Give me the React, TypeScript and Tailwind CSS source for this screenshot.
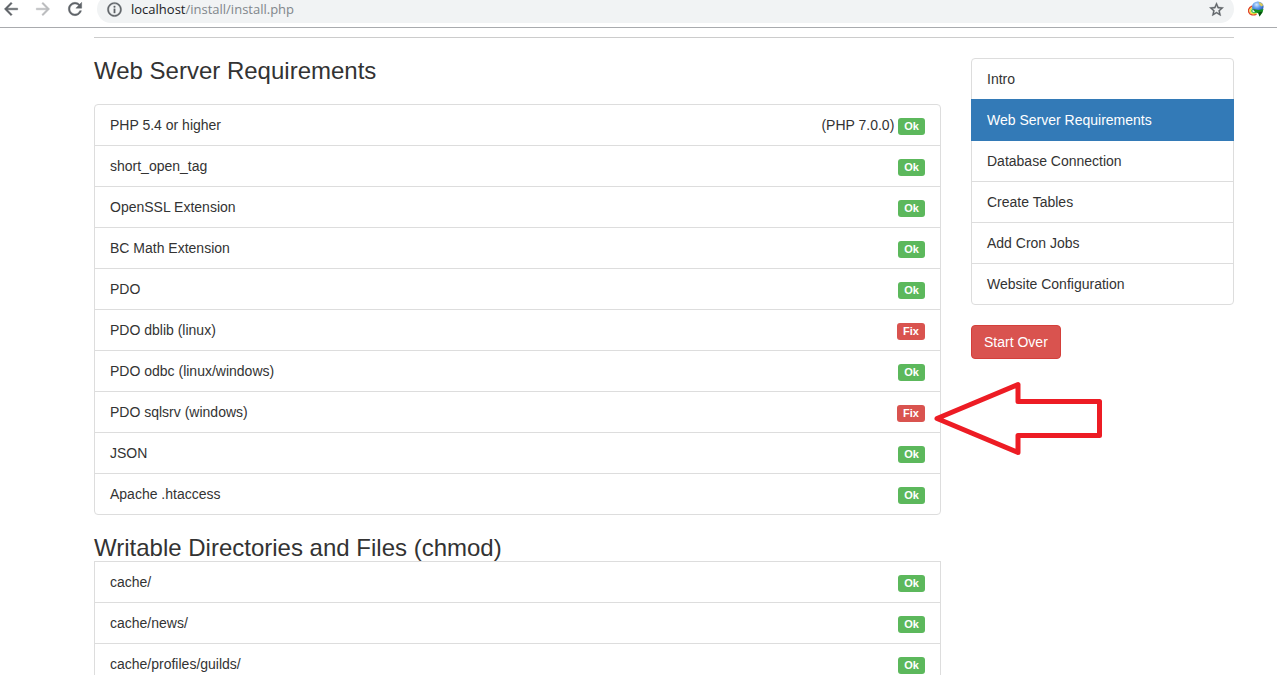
import React from 'react'
import clsx from 'clsx'

type Check = {
    name: string
    ok: boolean
    note?: string
}

const requirements: Check[] = [
    { name: 'PHP 5.4 or higher', ok: true, note: '(PHP 7.0.0)' },
    { name: 'short_open_tag', ok: true },
    { name: 'OpenSSL Extension', ok: true },
    { name: 'BC Math Extension', ok: true },
    { name: 'PDO', ok: true },
    { name: 'PDO dblib (linux)', ok: false },
    { name: 'PDO odbc (linux/windows)', ok: true },
    { name: 'PDO sqlsrv (windows)', ok: false },
    { name: 'JSON', ok: true },
    { name: 'Apache .htaccess', ok: true },
]

const directories: Check[] = [
    { name: 'cache/', ok: true },
    { name: 'cache/news/', ok: true },
    { name: 'cache/profiles/guilds/', ok: true },
]

const steps = [
    'Intro',
    'Web Server Requirements',
    'Database Connection',
    'Create Tables',
    'Add Cron Jobs',
    'Website Configuration',
]

// toolbar glyphs, slightly heavier than the stock material ones
const icons = {
    back: 'M20 11H7.830l5.590-5.590L12 4l-8 8 8 8 1.410-1.410L7.830 13H20v-2z',
    forward: 'M12 4l-1.410 1.410L16.170 11H4v2h12.170l-5.580 5.590L12 20l8-8z',
    reload: 'M17.650 6.350C16.200 4.900 14.210 4 12 4c-4.420 0-7.990 3.580-7.990 8s3.570 8 7.990 8c3.730 0 6.840-2.550 7.730-6h-2.080c-.820 2.330-3.040 4-5.650 4-3.310 0-6-2.690-6-6s2.690-6 6-6c1.660 0 3.140.690 4.220 1.780L13 11h7V4l-2.350 2.350z',
    info: 'M11 7h2v2h-2zm0 4h2v6h-2zm1-9C6.480 2 2 6.480 2 12s4.480 10 10 10 10-4.480 10-10S17.520 2 12 2zm0 18c-4.410 0-8-3.590-8-8s3.590-8 8-8 8 3.590 8 8-3.590 8-8 8z',
    star: 'M22 9.240l-7.190-.620L12 2 9.190 8.630 2 9.240l5.460 4.730L5.820 21 12 17.270 18.180 21l-1.630-7.030L22 9.240zM12 15.400l-3.760 2.270 1-4.280-3.320-2.880 4.380-.380L12 6.100l1.710 4.040 4.380.380-3.320 2.880 1 4.280L12 15.400z',
}

const Icon = ({ name, size }: { name: keyof typeof icons; size: number }) => (
    <svg width={size} height={size} viewBox="0 0 24 24" fill="currentColor" stroke="currentColor" strokeWidth="0.5" aria-hidden="true">
        <path d={icons[name]} />
    </svg>
)

const GlobeIcon = () => (
    <svg width="16" height="16" viewBox="0 0 16 16" aria-hidden="true">
        <defs>
            <radialGradient id="globe" cx="0.4" cy="0.3" r="0.75">
                <stop offset="0" stopColor="#d4e8ff" />
                <stop offset="0.45" stopColor="#5e9bea" />
                <stop offset="1" stopColor="#1f4bb0" />
            </radialGradient>
        </defs>
        <path d="M4.500 5C1 6.500 0 9 1 11.500C2 14 5.500 14.500 8.500 13" fill="none" stroke="#e0432a" strokeWidth="1.400" />
        <path d="M5 6.200C2.500 7.500 1.700 9.500 2.400 11C3.300 13 6 13 8.500 12" fill="none" stroke="#f7dc3a" strokeWidth="1.400" />
        <path d="M5.500 7.500C4 8.500 3.300 9.500 3.900 10.500C4.700 12 6.500 11.700 8 11" fill="none" stroke="#4cc04f" strokeWidth="1.400" />
        <ellipse cx="9.800" cy="5.800" rx="5.800" ry="5.200" fill="url(#globe)" />
        <path d="M10.500 0.900C13 1.200 14.500 2.500 15.200 4.200L13.500 5.500L11.500 3.800Z" fill="#d9c95a" />
        <path d="M5 8L10.500 9L15.500 8L14.500 11.500L11.500 15.500L10.300 12.200L7.500 11.500Z" fill="#14911f" />
        <path d="M10.300 11.500L14.500 10.500L11.500 15.500Z" fill="#0a4a10" />
    </svg>
)

const BrowserBar = () => (
    <header className="flex h-7 items-end overflow-hidden border-b border-[#a9abae] pb-1 pl-px pr-[13px] text-[#5f6368]">
        <div className="flex h-7 w-full shrink-0 items-center gap-3">
            <button type="button" aria-label="Back"><Icon name="back" size={20} /></button>
            <button type="button" aria-label="Forward" className="text-[#babcbe]"><Icon name="forward" size={20} /></button>
            <button type="button" aria-label="Reload"><Icon name="reload" size={20} /></button>
            <div className="mr-0.5 flex h-7 flex-1 items-center gap-2 rounded-full bg-[#f1f3f4] px-[9px]">
                <Icon name="info" size={17} />
                <p className="flex-1 font-['Open_Sans',sans-serif] text-[13px] leading-5 text-[#80868b]">
                    <span className="text-[#202124]">localhost</span>/install/install.php
                </p>
                <button type="button" aria-label="Bookmark"><Icon name="star" size={17} /></button>
            </div>
            <button type="button" aria-label="Downloads"><GlobeIcon /></button>
        </div>
    </header>
)

const StatusLabel = ({ ok }: { ok: boolean }) => (
    <span
        className={clsx(
            'h-[17px] self-end rounded-[3px] px-1.5 text-[11px] font-bold leading-4 text-white',
            ok ? 'bg-[#5cb85c]' : 'bg-[#d9534f]'
        )}
    >
        {ok ? 'Ok' : 'Fix'}
    </span>
)

const CheckList = ({ items, className }: { items: Check[]; className?: string }) => (
    <ul className={clsx('divide-y divide-[#ddd] border border-[#ddd]', className)}>
        {items.map((item) => (
            <li key={item.name} className="flex gap-1 px-[15px] py-2.5">
                <span className="flex-1">{item.name}</span>
                {item.note && <span>{item.note}</span>}
                <StatusLabel ok={item.ok} />
            </li>
        ))}
    </ul>
)

const Sidebar = () => (
    <aside className="relative w-[263px] shrink-0">
        <nav className="mb-5 rounded border border-[#ddd]">
            {steps.map((step, i) => (
                <a
                    key={step}
                    href="#"
                    className={clsx(
                        'block py-2.5',
                        i > 0 && 'border-t',
                        i === 1
                            ? 'relative -mx-px -mb-px border-b border-[#337ab7] bg-[#337ab7] px-4 text-white'
                            : 'border-[#ddd] px-[15px]'
                    )}
                >
                    {step}
                </a>
            ))}
        </nav>
        <button type="button" className="rounded border border-[#d43f3a] bg-[#d9534f] px-3 py-1.5 text-white">
            Start Over
        </button>
        {/* arrow pointing at the failed sqlsrv check */}
        <svg
            className="pointer-events-none absolute -left-10 top-80"
            width="174"
            height="80"
            viewBox="0 0 174 80"
            fill="none"
            stroke="#ed1c24"
            strokeWidth="5"
            strokeLinejoin="round"
            aria-hidden="true"
        >
            <path d="M6 40.500L87 6.500V23.500H168.500V57.500H87V74.500Z" />
        </svg>
    </aside>
)

const App = () => {
    return (
        <div className="h-screen overflow-hidden bg-white font-['Liberation_Sans',Arial,sans-serif] text-sm leading-5 text-[#333]">
            <BrowserBar />
            <div className="pl-[94px] pr-[43px] pt-[9px]">
                <hr className="mb-5 border-[#ccc]" />
                <div className="flex items-start gap-[30px]">
                    <main className="min-w-0 flex-1">
                        <h3 className="mb-5 text-2xl leading-[26px]">Web Server Requirements</h3>
                        <CheckList items={requirements} className="mb-5 rounded" />
                        <h3 className="text-2xl leading-[26px]">Writable Directories and Files (chmod)</h3>
                        <CheckList items={directories} />
                    </main>
                    <Sidebar />
                </div>
            </div>
        </div>
    )
}

export default App
